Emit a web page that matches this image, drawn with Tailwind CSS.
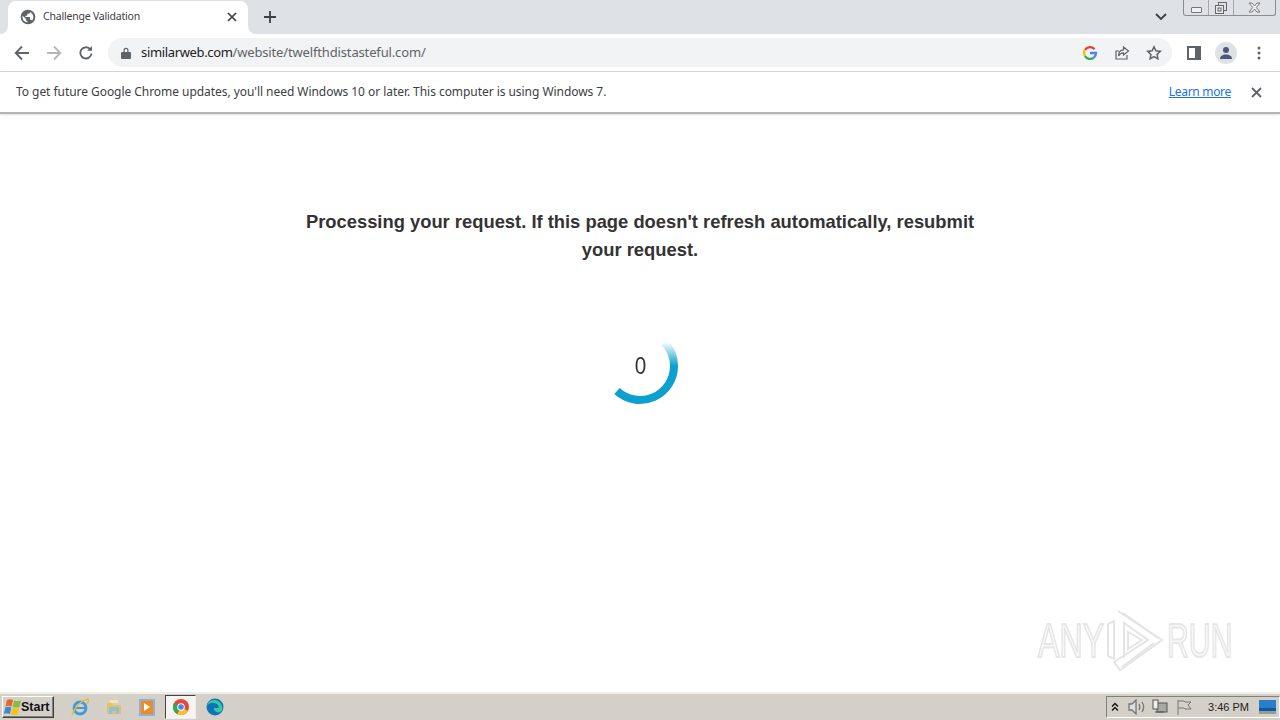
<!DOCTYPE html>
<html lang="en">
<head>
    <meta charset="UTF-8">
    <meta name="viewport" content="width=device-width, initial-scale=1.0">
    <title>Challenge Validation</title>
    <script src="https://cdn.jsdelivr.net/npm/@tailwindcss/browser@4"></script>
</head>
<body class="h-[720px] w-[1280px] overflow-hidden bg-white font-['Noto_Sans',sans-serif] text-[#3c4043] flex flex-col relative">

    <!-- tab strip -->
    <div class="h-[34px] bg-[#dee1e6] flex items-end pl-2 relative shrink-0">
        <div class="w-[240px] h-[33px] bg-white rounded-t-lg flex items-center pl-[12px] pr-[11px] gap-[7px] relative pb-[2px]">
            <!-- concave tab feet -->
            <div class="absolute -left-2 bottom-0 w-2 h-2 bg-white"><div class="w-2 h-2 bg-[#dee1e6] rounded-br-lg"></div></div>
            <div class="absolute -right-2 bottom-0 w-2 h-2 bg-white"><div class="w-2 h-2 bg-[#dee1e6] rounded-bl-lg"></div></div>
            <svg class="w-4 h-4 shrink-0" viewBox="0 0 24 24" fill="#5f6368"><path d="M12 1a11 11 0 1 0 0 22 11 11 0 0 0 0-22zM3.800 12c0-.6.1-1.200.2-1.800L9 15v1c0 1.100.9 2 2 2v2.100A8.200 8.200 0 0 1 3.800 12zm14.300 5.400c-.3-.8-1-1.400-2.100-1.400h-1v-3c0-.6-.4-1-1-1H8v-2h2c.6 0 1-.4 1-1V7h2c1.100 0 2-.9 2-2v-.4a8.200 8.200 0 0 1 3.100 12.800z"/></svg>
            <span class="text-[10.5px] leading-none flex-1 tracking-[-0.2px] text-[#3c4043]">Challenge Validation</span>
            <svg class="w-[10px] h-[10px]" viewBox="0 0 10 10" stroke="#3c4043" stroke-width="1.700"><path d="M1 1l8 8M9 1l-8 8"/></svg>
        </div>
        <svg class="w-[14px] h-[14px] ml-[15px] mb-[10px]" viewBox="0 0 14 14" stroke="#3c4043" stroke-width="1.800"><path d="M7 1v12M1 7h12"/></svg>
        <svg class="absolute left-[1155px] top-[13px] w-3 h-2" viewBox="0 0 12 8" fill="none" stroke="#3c4043" stroke-width="1.800"><path d="M1 1l5 5 5-5"/></svg>
        <!-- window buttons -->
        <div class="absolute left-[1183px] top-0 w-[93px] h-[16px] flex border border-t-0 border-[#8a8d92] rounded-b-[3px] bg-[#dee1e6]">
            <div class="w-[25px] flex items-center justify-center border-r border-[#a5a8ad]"><div class="w-[11px] h-[6px] mt-[4px] border border-[#777] rounded-[1px] bg-[#eef0f3]"></div></div>
            <div class="w-[25px] flex items-center justify-center border-r border-[#a5a8ad]">
                <svg class="w-[14px] h-[14px]" viewBox="0 0 14 14" fill="none" stroke="#666"><rect x="4.500" y="1.500" width="8" height="8"/><rect x="1.500" y="4.500" width="8" height="8" fill="#e8eaed"/><rect x="4" y="7" width="3" height="3"/></svg>
            </div>
            <div class="flex-1 flex items-center justify-center">
                <svg class="w-[13px] h-[11px]" viewBox="0 0 13 11" fill="#f2f3f5" stroke="#777"><path d="M1 1h3l2.500 3L9 1h3L8.300 5.500 12 10H9L6.500 7 4 10H1l3.700-4.500z"/></svg>
            </div>
        </div>
    </div>

    <!-- toolbar -->
    <div class="h-[38px] bg-white border-b border-[#d3d5d8] flex items-center shrink-0 relative">
        <div class="w-[108px] flex items-center pl-[14px] gap-[16px] shrink-0">
            <svg class="w-4 h-4" viewBox="0 0 16 16" fill="none" stroke="#5f6368" stroke-width="1.800"><path d="M15 8H2M8 1.500 1.700 8 8 14.500"/></svg>
            <svg class="w-4 h-4" viewBox="0 0 16 16" fill="none" stroke="#b4b6b9" stroke-width="1.800"><path d="M1 8h13M8 1.500 14.300 8 8 14.500"/></svg>
            <svg class="w-4 h-4" viewBox="0 0 16 16" fill="none" stroke="#5f6368" stroke-width="1.800"><path d="M13.500 8.500A5.600 5.600 0 1 1 12 4"/><path d="M14 1v4.800H9.200z" fill="#5f6368" stroke="none"/></svg>
        </div>
        <div class="w-[1064px] h-[29px] rounded-full bg-[#f1f3f4] flex items-center pl-[13px] pr-[10px] shrink-0">
            <svg class="w-[10px] h-[12px] shrink-0" viewBox="0 0 10 12" fill="#5f6368"><path d="M2.500 5V3.300a2.500 2.500 0 0 1 5 0V5H9a1 1 0 0 1 1 1v5a1 1 0 0 1-1 1H1a1 1 0 0 1-1-1V6a1 1 0 0 1 1-1zm1.200 0h2.600V3.300a1.300 1.300 0 0 0-2.600 0z"/></svg>
            <span class="ml-[10px] text-[13px] leading-none flex-1 text-[#5f6368] tracking-[-0.15px]"><span class="text-[#202124] tracking-[-0.35px]">similarweb.com</span>/website/twelfthdistasteful.com/</span>
            <div class="flex items-center gap-[16px]">
                <svg class="w-4 h-4" viewBox="0 0 16 16" fill="none" stroke-width="2.300">
                    <path d="M12.600 4.200A6 6 0 0 0 3 4.900" stroke="#ea4335"/>
                    <path d="M3 4.900a6 6 0 0 0 0 6.200" stroke="#fbbc05"/>
                    <path d="M3 11.100a6 6 0 0 0 8.800 1.500" stroke="#34a853"/>
                    <path d="M11.800 12.600A6 6 0 0 0 14 8H8" stroke="#4285f4"/>
                </svg>
                <svg class="w-4 h-4" viewBox="0 0 16 16" fill="none" stroke="#5f6368" stroke-width="1.200"><path d="M13 10v4H2V6h3"/><path d="M9.500 2 14.500 6 9.500 10V7.800C7 7.800 5.500 9 4.500 11c0-3.500 2-6 5-6.200z"/></svg>
                <svg class="w-4 h-4" viewBox="0 0 16 16" fill="none" stroke="#5f6368" stroke-width="1.500"><path d="M8 1.800l1.900 4 4.400.6-3.200 3 .8 4.400L8 11.600l-3.900 2.200.8-4.400-3.200-3 4.400-.6z"/></svg>
            </div>
        </div>
        <svg class="w-[14px] h-[14px] ml-[15px]" viewBox="0 0 14 14" fill="#5f6368"><path d="M0 0h14v14H0zm2 2v10h6V2z" fill-rule="evenodd"/></svg>
        <div class="w-[22px] h-[22px] ml-[14px] rounded-full bg-[#dee1e6] flex items-center justify-center">
            <svg class="w-[14px] h-[14px]" viewBox="0 0 14 14" fill="#4a5a78"><circle cx="7" cy="4" r="3"/><path d="M1 13c0-3 2.500-4.500 6-4.500s6 1.500 6 4.500z"/></svg>
        </div>
        <svg class="w-1 h-[14px] ml-[20px]" viewBox="0 0 4 14" fill="#5f6368"><circle cx="2" cy="2" r="1.500"/><circle cx="2" cy="7" r="1.500"/><circle cx="2" cy="12" r="1.500"/></svg>
    </div>

    <!-- update infobar -->
    <div class="h-[42px] bg-white border-b-2 border-[#b4b5b6] shadow-[0_1px_2px_rgba(0,0,0,0.12)] flex items-center pl-4 pr-[18px] shrink-0 z-10">
        <span class="text-[12px] leading-none tracking-[-0.05px] flex-1 text-[#3c4043]">To get future Google Chrome updates, you'll need Windows 10 or later. This computer is using Windows 7.</span>
        <a href="#" class="text-[12px] leading-none tracking-[-0.3px] text-[#1a73e8] underline mr-[20px]">Learn more</a>
        <svg class="w-[11px] h-[11px]" viewBox="0 0 11 11" stroke="#5f6368" stroke-width="1.800"><path d="M1 1l9 9M10 1l-9 9"/></svg>
    </div>

    <!-- page -->
    <main class="flex-1 relative flex flex-col items-center bg-white">
        <h1 class="w-[680px] mt-[94px] text-center font-['Liberation_Sans',sans-serif] text-[18.36px] leading-[28px] font-bold text-[#333333]">Processing your request. If this page doesn't refresh automatically, resubmit your request.</h1>
        <div class="relative w-[80px] h-[80px] mt-[62px] flex items-center justify-center">
            <svg class="absolute inset-0" width="80" height="80" viewBox="0 0 80 80" fill="none" stroke-width="8">
                <defs>
                    <linearGradient id="spinFade" x1="0" y1="0" x2="0" y2="1">
                        <stop offset="0" stop-color="#0ba0d0" stop-opacity="0"/>
                        <stop offset="1" stop-color="#0ba0d0"/>
                    </linearGradient>
                </defs>
                <path d="M64 16A34 34 0 0 1 74 40" stroke="url(#spinFade)"/>
                <path d="M74 40A34 34 0 0 1 17 65" stroke="#0ba0d0"/>
            </svg>
            <span class="font-['Liberation_Sans',sans-serif] text-[23px] leading-none text-[#333333] scale-x-90">0</span>
        </div>

        <!-- watermark -->
        <div class="absolute left-[1038px] top-[495px] w-[194px] h-[64px] flex items-center justify-between blur-[0.6px] font-['Liberation_Sans',sans-serif] text-[48px] leading-none text-[#f8f8f8] [-webkit-text-stroke:2px_#e6e6e6]">
            <span class="w-[65px] scale-x-[0.67] origin-left">ANY</span>
            <svg class="w-[58px] h-[62px]" viewBox="0 0 58 62" fill="none" stroke="#e4e4e4" stroke-width="2">
                <path d="M2 14V46L8 49V11z"/>
                <path d="M12 1 56 30 14 60 8 52 42 30 18 13V48"/>
                <path d="M17 3 52 28M16 57 48 33"/>
                <path d="M22 22 36 30 22 39z"/>
            </svg>
            <span class="w-[65px] scale-x-[0.63] origin-left">RUN</span>
        </div>
    </main>

    <!-- taskbar -->
    <div class="h-[28px] bg-[#d4d0c8] border-t-2 border-[#f1efe9] flex items-center relative shrink-0">
        <button class="ml-[2px] w-[52px] h-[22px] bg-[#d4d0c8] border border-white border-r-[#404040] border-b-[#404040] flex items-center pl-[1px] shadow-[inset_-1px_-1px_0_#808080]">
            <svg class="w-[17px] h-[16px] shrink-0" viewBox="0 0 17 16"><path fill="#e8642a" d="M3 1c2-1 4-1 6 0L7.500 7.500C5.500 6.500 3.500 6.500 1.500 7.500z"/><path fill="#8dbb3c" d="M10 1.500c2 .8 4 .8 7 0L15.500 8c-2.500.8-4.500.8-7 0z"/><path fill="#3c89d0" d="M1.300 8.500c2-1 4-1 6 0L6 15c-2-1-4-1-6 0z"/><path fill="#f4c21d" d="M8.300 9c2.500.8 4.500.8 7 0L14 15.500c-2.500.8-4.500.8-7 0z"/></svg>
            <span class="font-['Liberation_Sans',sans-serif] text-[12.5px] font-bold leading-none text-[#111]">Start</span>
        </button>
        <div class="flex items-center ml-[16px]">
            <svg class="w-[20px] h-[20px]" viewBox="0 0 20 20" fill="none"><circle cx="10" cy="11" r="6" stroke="#3f9bdc" stroke-width="2.800"/><path d="M5 11h10" stroke="#3f9bdc" stroke-width="2"/><path d="M2 18C5 9 12 3 18 2c1.500 1 0 3-1 5" stroke="#e6b93c" stroke-width="1.300"/></svg>
            <svg class="w-[18px] h-[18px] ml-[15px]" viewBox="0 0 18 18"><path fill="#e6c35c" d="M2 5h5l1 2h8v9H2z"/><path fill="#8fc1de" d="M4 9h10v7h-3v-3H7v3H4z"/><path fill="#f4e6b0" d="M5 2h8v3H5z"/></svg>
            <div class="w-[16px] h-[17px] ml-[16px] bg-[#f08c1e] border-2 border-[#8fb0d8] flex items-center justify-center">
                <div class="w-0 h-0 border-y-[4px] border-y-transparent border-l-[6px] border-l-white"></div>
            </div>
            <div class="w-[31px] h-[24px] ml-[10px] bg-[#f5f4f0] border border-[#444] border-r-[#eee] border-b-[#eee] flex items-center justify-center">
                <svg class="w-4 h-4" viewBox="0 0 16 16"><circle cx="8" cy="8" r="8" fill="#e8453c"/><path d="M8 8 15 12A8 8 0 0 1 4 15z" fill="#fbc02d"/><path d="M8 8 4 15A8 8 0 0 1 1 4z" fill="#34a853"/><circle cx="8" cy="8" r="3.800" fill="#fff"/><circle cx="8" cy="8" r="2.800" fill="#4285f4"/></svg>
            </div>
            <svg class="w-[18px] h-[18px] ml-[10px]" viewBox="0 0 18 18"><circle cx="9" cy="9" r="8.500" fill="#0f73b8"/><path d="M16.500 11c0-5-3.500-9-8-9C5 2 2 4 1 8c2-3 6-4 9-2.500 2.500 1.200 3 3 2.500 4.500H8c-.5 2 1 4 4 4.500 2 0 4-1.500 4.500-3.500z" fill="#38c9a0"/></svg>
        </div>

        <!-- tray -->
        <div class="ml-auto h-[22px] w-[174px] border border-[#808080] border-r-white border-b-white flex items-center pl-[4px] pr-[3px]">
            <svg class="w-[8px] h-[10px]" viewBox="0 0 8 10" fill="none" stroke="#111" stroke-width="1.400"><path d="M1 4.500 4 1.500 7 4.500M1 8.500 4 5.500 7 8.500"/></svg>
            <svg class="w-[18px] h-4 ml-[9px]" viewBox="0 0 18 16" fill="#ddd" stroke="#777" stroke-width="1.300"><path d="M1 5h3l4-4v14l-4-4H1z"/><path d="M11 5c1 2 1 4 0 6M14 3c2 3 2 7 0 10" fill="none"/></svg>
            <svg class="w-4 h-4 ml-[6px]" viewBox="0 0 16 16" fill="#a8a8a8" stroke="#555"><rect x="5" y="4" width="10" height="9"/><rect x="1" y="1" width="5" height="9" fill="#eee"/><path d="M3 13h9" fill="none"/></svg>
            <svg class="w-4 h-4 ml-[8px]" viewBox="0 0 16 16" fill="none" stroke="#777"><path d="M2 1v15M2 2h6l1 1h6l-3 3 3 4H9L8 9H2"/></svg>
            <span class="font-['Liberation_Sans',sans-serif] text-[11px] leading-none text-[#222] ml-auto mr-[10px]">3:46 PM</span>
            <svg class="w-[17px] h-[14px]" viewBox="0 0 17 14"><rect width="17" height="11" fill="#2a7fc9"/><rect x="0" y="8" width="17" height="3" fill="#0f5a9e"/><rect x="0" y="11" width="17" height="3" fill="#9a9a9a"/></svg>
        </div>
    </div>
</body>
</html>
